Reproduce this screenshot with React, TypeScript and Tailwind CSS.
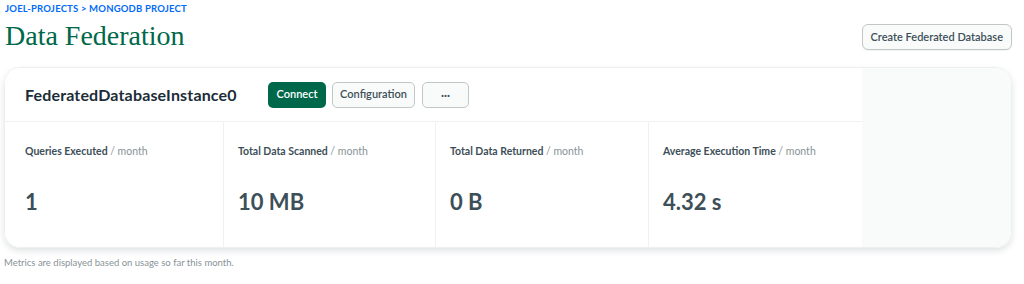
import React from "react";

const stats = [
  { label: "Queries Executed", value: "1", w: "w-[219px]", pl: "pl-[20px]" },
  { label: "Total Data Scanned", value: "10 MB", w: "w-[212px]", pl: "pl-[14px]" },
  { label: "Total Data Returned", value: "0 B", w: "w-[213px]", pl: "pl-[14px]" },
  { label: "Average Execution Time", value: "4.32 s", w: "flex-1", pl: "pl-[14px]" },
];

export default function App() {
  return (
    <div className="h-[284px] w-[1024px] bg-white text-[#001E2B]" style={{ fontFamily: "Lato, 'Noto Sans', sans-serif" }}>
      <div className="flex items-start justify-between pl-[5px] pr-[12px]">
        <div>
          <div className="pt-[3px] text-[9.5px] font-bold uppercase leading-[11px] tracking-[0.02em] text-[#016BF8]">
            Joel-Projects &gt; MongoDB Project
          </div>
          <h1
            className="mt-[7px] text-[28px] leading-[30px] text-[#00684A]"
            style={{ fontFamily: "'Liberation Serif', 'DejaVu Serif', serif" }}
          >
            Data Federation
          </h1>
        </div>
        <button className="mt-[24px] h-[26px] rounded-[6px] border border-[#C1C7C6] bg-[#F9FBFA] px-[8px] text-[11px] font-semibold text-[#3D4F58] shadow-[0_1px_1px_rgba(0,0,0,0.05)]">
          Create Federated Database
        </button>
      </div>

      <div className="ml-[4px] mr-[12px] mt-[16px] flex h-[181px] overflow-hidden rounded-[16px] border border-[#EEF0F0] shadow-[0_3px_6px_rgba(0,30,43,0.12)]">
        <div className="flex w-[857px] flex-col bg-white">
          <div className="flex h-[54px] items-center border-b border-[#F0F2F2] pl-[20px]">
            <div className="w-[243px] text-[16px] font-bold tracking-[0.01em] text-[#1C2D38]">FederatedDatabaseInstance0</div>
            <button className="h-[26px] w-[58px] rounded-[5px] bg-[#00684A] text-[11px] font-semibold text-white">
              Connect
            </button>
            <button className="ml-[6px] h-[26px] w-[83px] rounded-[5px] border border-[#C1C7C6] bg-[#F9FBFA] text-[11px] font-semibold text-[#3D4F58]">
              Configuration
            </button>
            <button className="ml-[7px] h-[26px] w-[47px] rounded-[5px] border border-[#C1C7C6] bg-[#F9FBFA] text-[11px] font-bold leading-none text-[#3D4F58]">
              ···
            </button>
          </div>
          <div className="flex flex-1">
            {stats.map((s, i) => (
              <div key={s.label} className={`${s.w} ${s.pl} pt-[23px] ${i < 3 ? "border-r border-[#F0F2F2]" : ""}`}>
                <div className="text-[10.5px] font-bold leading-[12px] text-[#3D4F58]">
                  {s.label} <span className="font-normal text-[#889397]">/ month</span>
                </div>
                <div className="mt-[31px] text-[22px] font-bold leading-[28px] text-[#3D4F58]">{s.value}</div>
              </div>
            ))}
          </div>
        </div>
        <div className="flex-1 bg-[#F9FBFA]" />
      </div>

      <div className="mt-[8px] pl-[4px] text-[9.5px] text-[#889397]">
        Metrics are displayed based on usage so far this month.
      </div>
    </div>
  );
}
